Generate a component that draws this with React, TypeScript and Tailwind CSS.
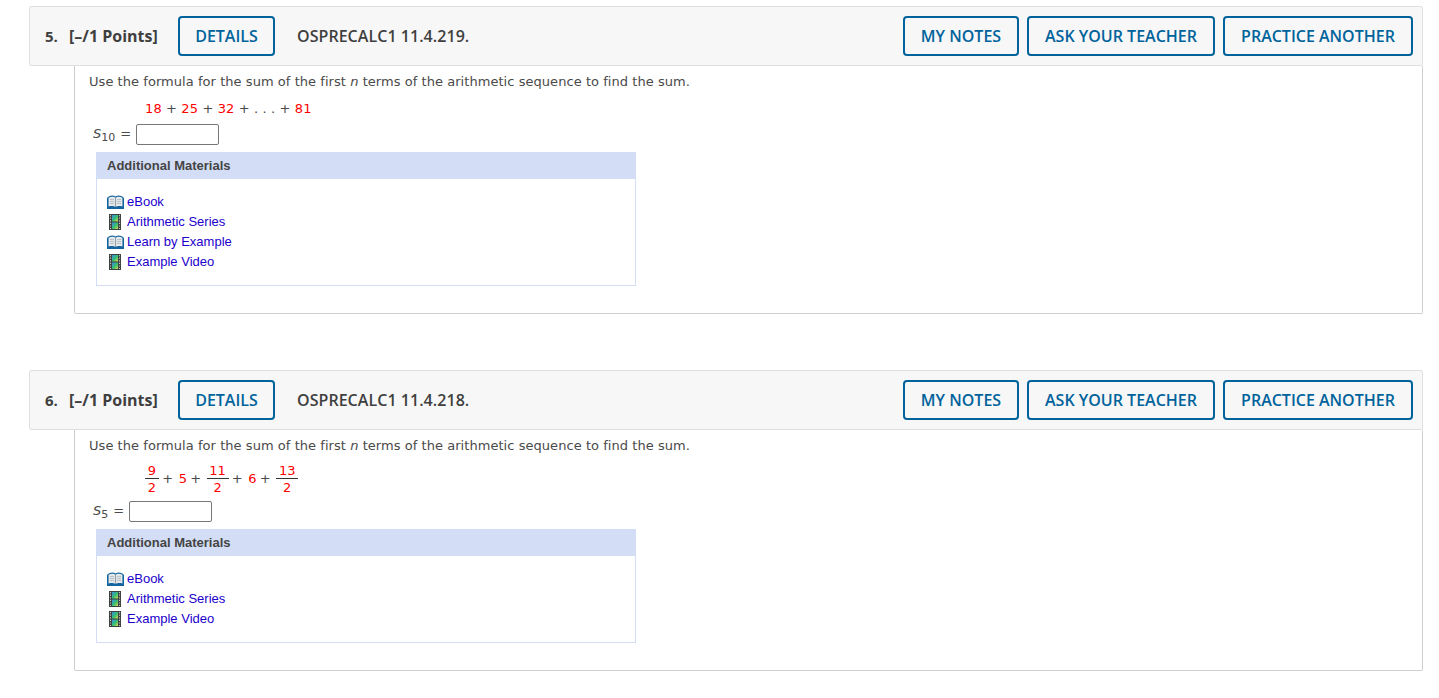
import React from 'react';

const BookIcon: React.FC = () => (
    <svg width="17" height="14" viewBox="0 0 17 14" className="shrink-0">
        <path d="M0 3 C3 0 6.5 0 8.5 1.6 C10.5 0 14 0 17 3 V14 H0 Z" fill="#14659f" />
        <path d="M1.6 2.8 C4 1.2 7 1.4 8.5 2.8 C10 1.4 13 1.2 15.4 2.8 V11.4 C13 10.6 10 10.8 8.5 12 C7 10.8 4 10.6 1.6 11.4 Z" fill="#e6eaec" />
        <path d="M3 4.6 C4.5 4.2 6 4.3 7.3 4.9 M3 6.6 C4.5 6.2 6 6.3 7.3 6.9 M3 8.6 C4.5 8.2 6 8.3 7.3 8.9 M9.7 4.9 C11 4.3 12.5 4.2 14 4.6 M9.7 6.9 C11 6.3 12.5 6.2 14 6.6 M9.7 8.9 C11 8.3 12.5 8.2 14 8.6" fill="none" stroke="#a3aeb6" strokeWidth="0.8" />
        <path d="M8.5 2.8 V12" stroke="#6f7f8c" strokeWidth="0.7" />
    </svg>
);

const FilmIcon: React.FC = () => (
    <svg width="12" height="16" viewBox="0 0 12 16" className="-ml-[2px] shrink-0">
        <defs>
            <linearGradient id="film-frame" x1="0" y1="0" x2="1" y2="1">
                <stop offset="0" stopColor="#3b8de0" />
                <stop offset="0.55" stopColor="#35c070" />
                <stop offset="1" stopColor="#e0d64a" />
            </linearGradient>
        </defs>
        <rect x="0" y="0" width="12" height="16" fill="#3c403e" />
        <rect x="3" y="1" width="6" height="6.5" fill="url(#film-frame)" />
        <rect x="3" y="8.5" width="6" height="6.5" fill="url(#film-frame)" />
        <path d="M1.5 1 V15 M10.5 1 V15" stroke="#c4c8c4" strokeWidth="1.1" strokeDasharray="1.2 1.4" />
    </svg>
);

const OutlineButton: React.FC<{ label: string; width: string }> = ({ label, width }) => (
    <button className={`h-10 ${width} shrink-0 rounded-[4px] border-2 border-[#00639c] bg-[#f7f7f7] text-center font-['Open_Sans',sans-serif] text-[16px] font-semibold text-[#00639c]`}>
        {label}
    </button>
);

const Resource: React.FC<{ icon: 'book' | 'film'; label: string }> = ({ icon, label }) => (
    <div className="flex h-5 items-center gap-[3px]">
        <span className="flex w-[17px] justify-center">{icon === 'book' ? <BookIcon /> : <FilmIcon />}</span>
        <a className="font-['Liberation_Sans',sans-serif] text-[13px] text-[#2200cc]">{label}</a>
    </div>
);

const Materials: React.FC<{ items: { icon: 'book' | 'film'; label: string }[] }> = ({ items }) => (
    <div className="ml-[7px] w-[540px] border border-[#d3ddf6]">
        <div className="flex h-[26px] items-center bg-[#d3ddf6] pl-[10px] font-['Liberation_Sans',sans-serif] text-[13px] font-bold text-[#444]">
            Additional Materials
        </div>
        <div className="pt-[13px] pb-[13px] pl-[10px]">
            {items.map((item) => (
                <Resource key={item.label} icon={item.icon} label={item.label} />
            ))}
        </div>
    </div>
);

const Fraction: React.FC<{ top: string; bottom: string; width: string }> = ({ top, bottom, width }) => (
    <span className={`inline-flex ${width} flex-col items-center text-[#f00]`}>
        <span className="h-[15px] w-full border-b border-[#333] text-center leading-[14px]">{top}</span>
        <span className="h-[15px] leading-[17px]">{bottom}</span>
    </span>
);

const Plus: React.FC = () => <span className="mr-[5.5px] ml-[3.25px]">+</span>;

const Answer: React.FC<{ sub: string }> = ({ sub }) => (
    <div className="flex h-[24px] items-center pl-[4px]">
        <span>
            <i>S</i>
            <sub className="text-[11px] not-italic">{sub}</sub>
        </span>
        <span className="ml-[5px]">=</span>
        <input className="ml-[5px] h-[21px] w-[83px] rounded-[2px] border border-[#777] bg-white" />
    </div>
);

const Question: React.FC<{ number: string; code: string; children: React.ReactNode }> = ({ number, code, children }) => (
    <section>
        <header className="flex h-[60px] items-center rounded-[2px] border border-[#e0e0e0] bg-[#f7f7f7] pr-[9px] pl-[15px] font-['Open_Sans',sans-serif] text-[#3f3f3f]">
            <span className="w-[24px] text-[15px] font-bold">{number}</span>
            <span className="w-[109px] text-[16px] font-bold">[–/1 Points]</span>
            <OutlineButton label="DETAILS" width="w-[97px]" />
            <span className="ml-[22px] text-[16px] font-semibold tracking-[0.05px]">{code}</span>
            <div className="ml-auto flex gap-2">
                <OutlineButton label="MY NOTES" width="w-[116px]" />
                <OutlineButton label="ASK YOUR TEACHER" width="w-[188px]" />
                <OutlineButton label="PRACTICE ANOTHER" width="w-[190px]" />
            </div>
        </header>
        <div className="ml-[45px] rounded-b-[2px] border-x border-b border-[#cfcfcf] pl-[14px] font-['DejaVu_Sans',sans-serif] text-[13px] text-[#4a4a4a]">
            {children}
        </div>
    </section>
);

const App: React.FC = () => {
    return (
        <div className="flex min-h-[698px] flex-col gap-[56px] bg-white pt-[6px] pr-4 pl-[29px]">
            <Question number="5." code="OSPRECALC1 11.4.219.">
                <p className="h-[31px] pt-[8px] leading-[16px] tracking-[0.05px]">
                    Use the formula for the sum of the first <i>n</i> terms of the arithmetic sequence to find the sum.
                </p>
                <p className="ml-[56px] h-[25px] pt-[4px] leading-[16px] tracking-[0.12px]">
                    <span className="text-[#f00]">18</span> + <span className="text-[#f00]">25</span> + <span className="text-[#f00]">32</span> + . . . + <span className="text-[#f00]">81</span>
                </p>
                <Answer sub="10" />
                <div className="mt-[6px] pb-[27px]">
                    <Materials
                        items={[
                            { icon: 'book', label: 'eBook' },
                            { icon: 'film', label: 'Arithmetic Series' },
                            { icon: 'book', label: 'Learn by Example' },
                            { icon: 'film', label: 'Example Video' },
                        ]}
                    />
                </div>
            </Question>
            <Question number="6." code="OSPRECALC1 11.4.218.">
                <p className="h-[31px] pt-[8px] leading-[16px] tracking-[0.05px]">
                    Use the formula for the sum of the first <i>n</i> terms of the arithmetic sequence to find the sum.
                </p>
                <div className="ml-[56px] flex h-[38px] items-center pb-[3px]">
                    <Fraction top="9" bottom="2" width="w-[14px]" />
                    <Plus />
                    <span className="text-[#f00]">5</span>
                    <Plus />
                    <Fraction top="11" bottom="2" width="w-[22px]" />
                    <Plus />
                    <span className="text-[#f00]">6</span>
                    <Plus />
                    <Fraction top="13" bottom="2" width="w-[22px]" />
                </div>
                <Answer sub="5" />
                <div className="mt-[6px] pb-[27px]">
                    <Materials
                        items={[
                            { icon: 'book', label: 'eBook' },
                            { icon: 'film', label: 'Arithmetic Series' },
                            { icon: 'film', label: 'Example Video' },
                        ]}
                    />
                </div>
            </Question>
        </div>
    );
};

export default App;
